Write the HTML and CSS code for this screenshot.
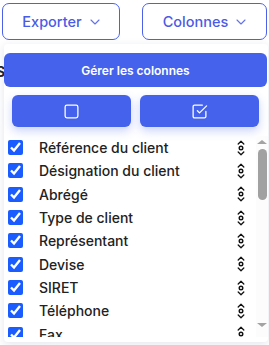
FILE: index.html
```html
<!DOCTYPE html>
<html lang="fr">
<head>
<meta charset="utf-8">
<link rel="stylesheet" href="styles.css">
</head>
<body>
<div class="page">
  <div class="bg-text">S</div>
  <div class="toolbar">
    <button class="tool-btn exporter">Exporter
      <svg class="chev" viewBox="0 0 10 6" width="10" height="6"><path d="M1 1 L5 5 L9 1" fill="none" stroke="currentColor" stroke-width="1.1" stroke-linecap="round" stroke-linejoin="round"/></svg>
    </button>
    <button class="tool-btn colonnes">Colonnes
      <svg class="chev" viewBox="0 0 10 6" width="10" height="6"><path d="M1 1 L5 5 L9 1" fill="none" stroke="currentColor" stroke-width="1.1" stroke-linecap="round" stroke-linejoin="round"/></svg>
    </button>
  </div>

  <div class="panel">
    <button class="manage-btn">Gérer les colonnes</button>
    <div class="actions">
      <button class="act-btn" aria-label="Tout décocher">
        <svg viewBox="0 0 24 24" width="17" height="17" fill="none" stroke="#fff" stroke-width="1.8" stroke-linecap="round" stroke-linejoin="round"><rect x="3" y="3" width="18" height="18" rx="2.5"/></svg>
      </button>
      <button class="act-btn" aria-label="Tout cocher">
        <svg viewBox="0 0 24 24" width="17" height="17" fill="none" stroke="#fff" stroke-width="1.8" stroke-linecap="round" stroke-linejoin="round"><polyline points="9 11 12 14 22 4"/><path d="M21 12v7a2 2 0 0 1-2 2H5a2 2 0 0 1-2-2V5a2 2 0 0 1 2-2h11"/></svg>
      </button>
    </div>
    <div class="list-wrap">
      <ul class="col-list">
        <li class="row"><input type="checkbox" checked><span class="label">Référence du client</span><svg class="drag" viewBox="0 0 8 16" width="8" height="16"><path d="M1.2 4 L4 1.3 L6.8 4 M1.2 12 L4 14.7 L6.8 12" fill="none" stroke="#111" stroke-width="1.3" stroke-linecap="round" stroke-linejoin="round"/><circle cx="4" cy="8" r="1.8" fill="none" stroke="#111" stroke-width="1.4"/></svg></li>
        <li class="row"><input type="checkbox" checked><span class="label">Désignation du client</span><svg class="drag" viewBox="0 0 8 16" width="8" height="16"><path d="M1.2 4 L4 1.3 L6.8 4 M1.2 12 L4 14.7 L6.8 12" fill="none" stroke="#111" stroke-width="1.3" stroke-linecap="round" stroke-linejoin="round"/><circle cx="4" cy="8" r="1.8" fill="none" stroke="#111" stroke-width="1.4"/></svg></li>
        <li class="row"><input type="checkbox" checked><span class="label">Abrégé</span><svg class="drag" viewBox="0 0 8 16" width="8" height="16"><path d="M1.2 4 L4 1.3 L6.8 4 M1.2 12 L4 14.7 L6.8 12" fill="none" stroke="#111" stroke-width="1.3" stroke-linecap="round" stroke-linejoin="round"/><circle cx="4" cy="8" r="1.8" fill="none" stroke="#111" stroke-width="1.4"/></svg></li>
        <li class="row"><input type="checkbox" checked><span class="label">Type de client</span><svg class="drag" viewBox="0 0 8 16" width="8" height="16"><path d="M1.2 4 L4 1.3 L6.8 4 M1.2 12 L4 14.7 L6.8 12" fill="none" stroke="#111" stroke-width="1.3" stroke-linecap="round" stroke-linejoin="round"/><circle cx="4" cy="8" r="1.8" fill="none" stroke="#111" stroke-width="1.4"/></svg></li>
        <li class="row"><input type="checkbox" checked><span class="label">Représentant</span><svg class="drag" viewBox="0 0 8 16" width="8" height="16"><path d="M1.2 4 L4 1.3 L6.8 4 M1.2 12 L4 14.7 L6.8 12" fill="none" stroke="#111" stroke-width="1.3" stroke-linecap="round" stroke-linejoin="round"/><circle cx="4" cy="8" r="1.8" fill="none" stroke="#111" stroke-width="1.4"/></svg></li>
        <li class="row"><input type="checkbox" checked><span class="label">Devise</span><svg class="drag" viewBox="0 0 8 16" width="8" height="16"><path d="M1.2 4 L4 1.3 L6.8 4 M1.2 12 L4 14.7 L6.8 12" fill="none" stroke="#111" stroke-width="1.3" stroke-linecap="round" stroke-linejoin="round"/><circle cx="4" cy="8" r="1.8" fill="none" stroke="#111" stroke-width="1.4"/></svg></li>
        <li class="row"><input type="checkbox" checked><span class="label">SIRET</span><svg class="drag" viewBox="0 0 8 16" width="8" height="16"><path d="M1.2 4 L4 1.3 L6.8 4 M1.2 12 L4 14.7 L6.8 12" fill="none" stroke="#111" stroke-width="1.3" stroke-linecap="round" stroke-linejoin="round"/><circle cx="4" cy="8" r="1.8" fill="none" stroke="#111" stroke-width="1.4"/></svg></li>
        <li class="row"><input type="checkbox" checked><span class="label">Téléphone</span><svg class="drag" viewBox="0 0 8 16" width="8" height="16"><path d="M1.2 4 L4 1.3 L6.8 4 M1.2 12 L4 14.7 L6.8 12" fill="none" stroke="#111" stroke-width="1.3" stroke-linecap="round" stroke-linejoin="round"/><circle cx="4" cy="8" r="1.8" fill="none" stroke="#111" stroke-width="1.4"/></svg></li>
        <li class="row"><input type="checkbox" checked><span class="label">Fax</span><svg class="drag" viewBox="0 0 8 16" width="8" height="16"><path d="M1.2 4 L4 1.3 L6.8 4 M1.2 12 L4 14.7 L6.8 12" fill="none" stroke="#111" stroke-width="1.3" stroke-linecap="round" stroke-linejoin="round"/><circle cx="4" cy="8" r="1.8" fill="none" stroke="#111" stroke-width="1.4"/></svg></li>
      </ul>
      <div class="scrollbar" aria-hidden="true">
        <span class="sb-arrow up"></span>
        <span class="sb-thumb"></span>
        <span class="sb-arrow down"></span>
      </div>
    </div>
  </div>
</div>
</body>
</html>
```
FILE: styles.css
```css
* { box-sizing: border-box; }
html, body { margin: 0; padding: 0; }
body {
  font-family: Inter, "Noto Sans", "DejaVu Sans", sans-serif;
  background: #fff;
  width: 269px;
  height: 345px;
  overflow: hidden;
}
.page {
  position: relative;
  width: 269px;
  height: 345px;
}
.bg-text {
  position: absolute;
  left: -4px;
  top: 63px;
  font-size: 14px;
  font-weight: 700;
  color: #222;
}
.toolbar {
  display: flex;
  gap: 22px;
  padding: 3px 2px 0 2px;
}
.tool-btn {
  height: 37px;
  border: 1px solid #4b62e8;
  border-radius: 7px;
  background: #fff;
  color: #4a5be6;
  font-family: inherit;
  font-size: 14.5px;
  font-weight: 500;
  display: flex;
  align-items: center;
  justify-content: center;
  gap: 8px;
  padding: 0;
}
.exporter { width: 118px; }
.colonnes { width: 125px; }
.chev { margin-top: 1px; color: #6373e8; }

.panel {
  position: absolute;
  left: 4px;
  top: 44px;
  width: 264px;
  height: 298px;
  background: #fff;
  border-radius: 4px;
  box-shadow: 0 2px 8px rgba(30, 40, 90, 0.12);
  display: flex;
  flex-direction: column;
}
.manage-btn {
  margin-top: 9px;
  height: 34px;
  width: 263px;
  border: none;
  border-radius: 6px;
  background: #4562ec;
  color: #fff;
  font-family: inherit;
  font-size: 12px;
  font-weight: 600;
  padding: 0;
}
.actions {
  display: flex;
  gap: 9px;
  padding: 8px 8px 0 8px;
}
.act-btn {
  width: 119px;
  height: 32px;
  border: none;
  border-radius: 6px;
  background: #4562ec;
  box-shadow: 0 4px 10px rgba(69, 98, 236, 0.28);
  display: flex;
  align-items: center;
  justify-content: center;
  padding: 0;
}
.list-wrap {
  display: flex;
  flex: 1;
  min-height: 0;
  margin-top: 9px;
  margin-bottom: 5px;
}
.col-list {
  list-style: none;
  margin: 0;
  padding: 0;
  flex: 1;
  min-width: 0;
  overflow: hidden;
}
.row {
  height: 23.33px;
  display: flex;
  align-items: center;
  padding-left: 4px;
}
.row input {
  width: 15px;
  height: 15px;
  margin: 0;
  accent-color: #1b5cff;
  flex: none;
}
.label {
  margin-left: 16px;
  font-size: 14px;
  font-weight: 500;
  color: #222;
  flex: 1;
  white-space: nowrap;
}
.drag {
  flex: none;
  margin-right: 11px;
}
.scrollbar {
  width: 12px;
  flex: none;
  display: flex;
  flex-direction: column;
  align-items: center;
  padding: 4px 0 10px;
  background: #fcfcfc;
}
.sb-arrow {
  width: 0;
  height: 0;
  border-left: 5px solid transparent;
  border-right: 5px solid transparent;
}
.sb-arrow.up { border-bottom: 4px solid #a3a3a3; }
.sb-arrow.down { border-top: 4px solid #a3a3a3; margin-top: auto; }
.sb-thumb {
  width: 9px;
  height: 51px;
  margin-top: 5px;
  border-radius: 5px;
  background: #a1a1a1;
}
```
